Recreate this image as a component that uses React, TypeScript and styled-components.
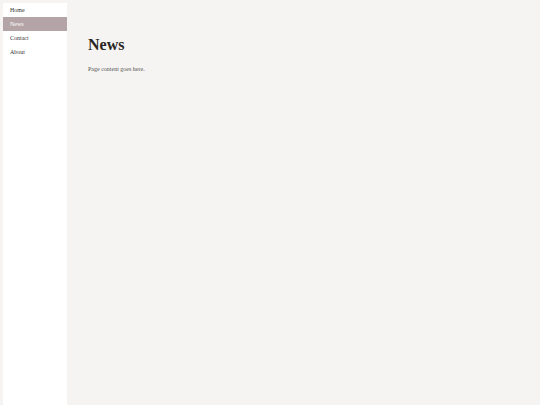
import React, { useState } from 'react';
import styled, { createGlobalStyle } from 'styled-components';

const GlobalStyle = createGlobalStyle`
    html, body {
        margin: 0;
        padding: 0;
        background: #f5f4f2;
        font-family: "Liberation Serif", "Times New Roman", serif;
    }
`;

const Layout = styled.div`
    display: flex;
    min-height: 100vh;
    padding: 3px 0 0 3px;
    box-sizing: border-box;
`;

const Sidebar = styled.nav`
    width: 64px;
    background: #ffffff;
    display: flex;
    flex-direction: column;
    flex-shrink: 0;
`;

const NavItem = styled.a<{ $active?: boolean }>`
    display: block;
    height: 14px;
    line-height: 14px;
    padding: 0 7px;
    font-size: 6px;
    color: ${p => (p.$active ? '#ffffff' : '#333333')};
    background: ${p => (p.$active ? '#b4a4a6' : 'transparent')};
    text-decoration: none;
    cursor: pointer;
`;

const Main = styled.main`
    flex: 1;
    padding: 33px 21px;
`;

const Title = styled.h1`
    margin: 0 0 11px;
    font-size: 16px;
    line-height: 18px;
    font-weight: bold;
    color: #2a2622;
`;

const Text = styled.p`
    margin: 0;
    font-size: 6px;
    line-height: 8px;
    color: #555555;
`;

const pages = ['Home', 'News', 'Contact', 'About'];

const App = () => {
    const [active, setActive] = useState('News');

    return <>
        <GlobalStyle />
        <Layout>
            <Sidebar>
                {pages.map(p => (
                    <NavItem key={p} $active={p === active} onClick={() => setActive(p)}>{p}</NavItem>
                ))}
            </Sidebar>
            <Main>
                <Title>{active}</Title>
                <Text>Page content goes here.</Text>
            </Main>
        </Layout>
    </>;
};

export default App;
